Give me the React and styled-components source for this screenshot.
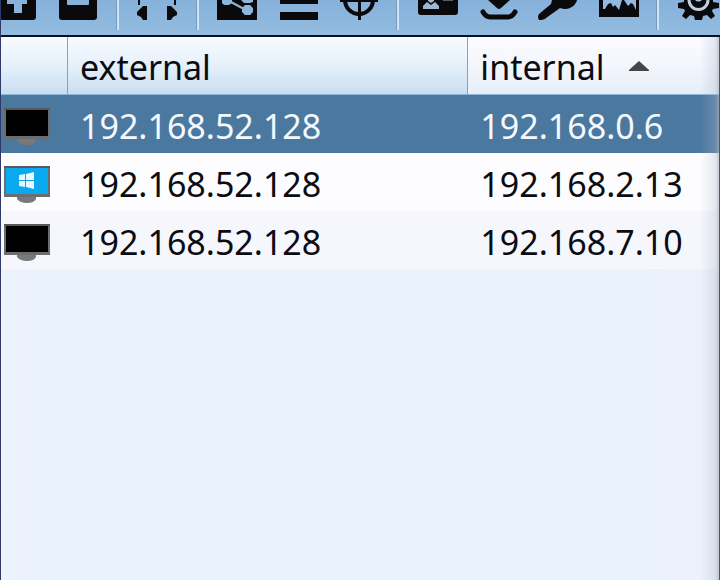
import React from 'react';
import styled, { createGlobalStyle } from 'styled-components';


const GlobalStyle = createGlobalStyle`
    * {
        box-sizing : border-box;
    }

    body {
        margin : 0;
        background : #ebf2fb;
        font-family : "Noto Sans", "Open Sans", sans-serif;
    }
`;

const Window = styled.div`
    position : relative;
    min-height : 100vh;
    overflow : hidden;
    border-left : 1px solid #2f3a68;
    background : linear-gradient(to right, #edf2fb, #eaf2fb 60px, #eaf2fb 88%, #edf1fb 96%);
`;

/* shadow that runs down the right edge, over the table */
const EdgeShade = styled.div`
    position : absolute;
    top : 37px;
    right : 0;
    bottom : 0;
    width : 20px;
    border-right : 1px solid #55565c;
    background : linear-gradient(to right, rgba(170, 182, 210, 0), rgba(170, 182, 206, 0.3) 80%, rgba(175, 180, 188, 0.7));
    pointer-events : none;
`;

const Toolbar = styled.div`
    display : flex;
    height : 37px;
    overflow : hidden;
    border-bottom : 2px solid #081226;
    background : linear-gradient(#86b1da, #94bce0);
`;

const ToolGroup = styled.div`
    display : flex;
    flex : none;

    &:first-child {
        margin-left : -13px;
    }
`;

const ToolButton = styled.button`
    display : flex;
    justify-content : center;
    flex : none;
    width : 60px;
    height : 36px;
    padding : 0;
    border : 0;
    background : none;
    color : #0a0a0c;
`;

const Separator = styled.span`
    flex : none;
    width : 3px;
    height : 30px;
    margin : 0 9px 0 8px;
    border-left : 1px solid #7799bd;
    border-right : 2px solid #cfe2f6;
`;

const Table = styled.table`
    width : 100%;
    table-layout : fixed;
    border-collapse : separate;
    border-spacing : 0;
    font-size : 34px;
    line-height : 54px;
`;

const IconCol = styled.col`
    width : 67px;
`;

const InternalCol = styled.col`
    width : 35%;
`;

const HeadCell = styled.th`
    height : 58px;
    padding : 2px 12px 0;
    border-right : ${props => props.$last ? '0' : '1px solid #72a8d2'};
    border-bottom : 1px solid #8fb6d8;
    background : ${props => props.$last
        ? 'linear-gradient(#fbfcff, #f3f6fc 50%, #e6eef8)'
        : 'linear-gradient(#f8fbff, #e6f0fb 50%, #c9def2)'};
    color : #0b0b12;
    font-weight : 400;
    text-align : left;
`;

const SortButton = styled.button`
    display : flex;
    align-items : center;
    gap : 24px;
    padding : 0;
    border : 0;
    background : none;
    color : inherit;
    font : inherit;
`;

const Row = styled.tr`
    background : ${props => props.$selected ? '#4b789e' : '#fdfdff'};
    color : ${props => props.$selected ? '#f4f9ff' : '#0b0b12'};

    &:last-child {
        background : #f6f7fc;
    }
`;

const Cell = styled.td`
    height : 58px;
    padding : 4px 12px 0;
    white-space : nowrap;
`;

const IconCell = styled(Cell)`
    padding : 0 2px;

    svg {
        display : block;
    }
`;

const tools = [
    [
        {
            label: 'Connect',
            art: <path d="M3 0H10V4H17V13H25V4H30V0H39V17Q39 20 36 20H6Q3 20 3 17Z" />,
        },
        {
            label: 'Disconnect',
            art: <path d="M2 0H10V4Q10 5 11 5H31Q32 5 32 4V0H40V17Q40 20 37 20H5Q2 20 2 17Z" />,
        },
    ],
    [
        {
            label: 'Listeners',
            art: (
                <>
                    <path d="M2 0V5M38 0V5" stroke="currentColor" strokeWidth="2" fill="none" />
                    <path d="M6 6H10V20H6L4 17L0 15V12L3 9ZM30 6H34L37 9L40 12V15L36 17L34 20H30Z" />
                </>
            ),
        },
    ],
    [
        {
            label: 'Pivot graph',
            art: (
                <>
                    <path d="M0 0H40V20H0Z" />
                    <path d="M14 2L27 9" stroke="#8db6dc" strokeWidth="2" />
                    <path d="M5 0H15V3L12 5H7L5 3ZM28 5H33L36 8V12L33 15H28L25 12V8Z" fill="#8db6dc" />
                    <path d="M24 0H36V2L33 3H27Z" fill="#8db6dc" />
                </>
            ),
        },
        {
            label: 'Session table',
            art: <path d="M3 0H41V4H3ZM3 12H41V20H3Z" />,
        },
        {
            label: 'Target table',
            art: (
                <>
                    <path d="M8 0A14 14 0 0 0 36 0" stroke="currentColor" strokeWidth="4" fill="none" />
                    <path d="M3 0H41V2H3ZM21 0H24V20H21Z" />
                </>
            ),
        },
    ],
    [
        {
            label: 'Credentials',
            art: (
                <>
                    <path d="M1 0H41V12Q41 15 38 15H4Q1 15 1 12Z" />
                    <path d="M6 9V6L10 2L14 5L18 2L22 6V9Z" fill="#9fb9d1" />
                    <path d="M11 0H17V1L14 3L11 1Z" fill="#9fb9d1" />
                    <path d="M26 0H36V1H26Z" fill="#56616c" />
                </>
            ),
        },
        {
            label: 'Downloads',
            art: (
                <>
                    <path d="M11 0H33L24 8Q22 10 20 8Z" />
                    <path d="M6 12Q9 17 13 17H31Q35 17 38 12" stroke="currentColor" strokeWidth="5" strokeLinecap="round" strokeLinejoin="round" fill="none" />
                </>
            ),
        },
        {
            label: 'Keystrokes',
            art: <path d="M15 0H40Q39 5 33 8Q28 10 23 8L9 18Q7 20 2 20Q0 17 2 14L14 4Z" />,
        },
        {
            label: 'Screenshots',
            art: (
                <>
                    <path d="M2 0H42V17H2Z" />
                    <path d="M6 0H39V10L36 4L34 3L31 6L27 0H25L22 10L18 5L16 7L14 3L11 4L8 9H6Z" fill="#93bade" />
                </>
            ),
        },
    ],
    [
        {
            label: 'Settings',
            art: (
                <>
                    <path d="M1 3L7 2V0H36V2L42 3V8L36 9L35 11L38 16L34 19L30 15L26 16L25 20H18L17 16L13 15L9 19L5 16L8 11L7 9L1 8Z" />
                    <path d="M12 0A9 9 0 0 0 31 0" stroke="#bfd0e2" strokeWidth="3" fill="none" />
                    <path d="M18 0A4 3 0 0 0 25 0Z" fill="#a5c2e0" />
                </>
            ),
        },
    ],
];

const sessions = [
    { external: '192.168.52.128', internal: '192.168.0.6', os: 'unknown' },
    { external: '192.168.52.128', internal: '192.168.2.13', os: 'windows' },
    { external: '192.168.52.128', internal: '192.168.7.10', os: 'unknown' },
];

const Monitor = ({ os }) => (
    <svg width="48" height="44" viewBox="0 0 48 44" role="img" aria-label={os}>
        <path d="M14 36H33V39Q31 43 24 43Q17 43 14 39Z" fill="#77797c" />
        <path d="M1 6H47V37H1Z" fill="#6c6d70" />
        <path d="M1 6H47V8H1Z" fill="#58595c" />
        <path d="M3 8H45V34H3Z" fill={os === 'windows' ? '#08a9ee' : '#000'} />
        {os === 'windows' && (
            <path d="M16 15L22 14V20H16ZM23 14L31 12V20H23ZM16 21H22V27L16 26ZM23 21H31V29L23 27Z" fill="#e9f8ff" />
        )}
    </svg>
);

const App = () => {
    return (
        <Window>
            <GlobalStyle />
            <Toolbar>
                {tools.map((group, index) => (
                    <ToolGroup key={index}>
                        {index > 0 && <Separator />}
                        {group.map(tool => (
                            <ToolButton key={tool.label} aria-label={tool.label}>
                                <svg width="42" height="24" viewBox="0 0 42 24" fill="currentColor">{tool.art}</svg>
                            </ToolButton>
                        ))}
                    </ToolGroup>
                ))}
            </Toolbar>
            <Table>
                <colgroup>
                    <IconCol />
                    <col />
                    <InternalCol />
                </colgroup>
                <thead>
                    <tr>
                        <HeadCell aria-label="system" />
                        <HeadCell>
                            <SortButton>external</SortButton>
                        </HeadCell>
                        <HeadCell $last aria-sort="ascending">
                            <SortButton>
                                internal
                                <svg width="20" height="12" viewBox="0 0 20 12">
                                    <path d="M10 0L20 9V10H0V9Z" fill="#45454b" />
                                </svg>
                            </SortButton>
                        </HeadCell>
                    </tr>
                </thead>
                <tbody>
                    {sessions.map((session, index) => (
                        <Row key={session.internal} $selected={index === 0}>
                            <IconCell><Monitor os={session.os} /></IconCell>
                            <Cell>{session.external}</Cell>
                            <Cell>{session.internal}</Cell>
                        </Row>
                    ))}
                </tbody>
            </Table>
            <EdgeShade />
        </Window>
    );
};

export default App;
